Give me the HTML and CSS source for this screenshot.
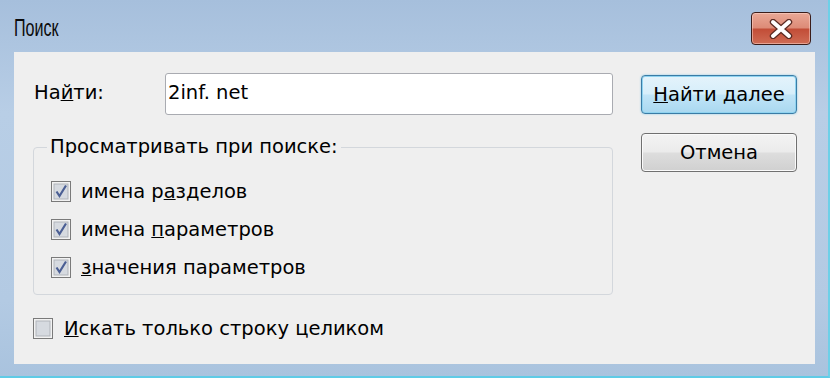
FILE: index.html
```html
<!DOCTYPE html>
<html>
  <head>
    <title>Поиск</title>
    <link rel="stylesheet" href="styles.css">
  </head>
  <body>
    <div class="window">
      <div class="titlebar">
        <span class="title">Поиск</span>
        <div class="close">
          <svg width="28" height="20" viewBox="0 0 28 20">
            <path d="M6 3 L22 17 M22 3 L6 17" stroke="#5a2a22" stroke-width="6.4" stroke-linecap="round"/>
            <path d="M6 3 L22 17 M22 3 L6 17" stroke="#ffffff" stroke-width="4" stroke-linecap="round"/>
          </svg>
        </div>
      </div>
      <div class="client">
        <div class="main">
          <div class="find-row">
            <label class="find-label">На<u>й</u>ти:</label>
            <div class="input">2inf. net</div>
          </div>
          <fieldset class="group">
            <legend>Просматривать при поиске:</legend>
            <div class="check">
              <svg class="box" width="20" height="21" viewBox="0 0 20 21">
                <rect x="0.5" y="0.5" width="19" height="20" fill="#f2f2f2" stroke="#7a7a7a"/>
                <rect x="3" y="3" width="14" height="15" fill="#d6dae0" stroke="#b0b4ba"/>
                <path d="M5.5 10.5 L8.5 15 L15 4.5" fill="none" stroke="#4b5f94" stroke-width="2.2"/>
              </svg>
              <span>имена р<u>а</u>зделов</span>
            </div>
            <div class="check">
              <svg class="box" width="20" height="21" viewBox="0 0 20 21">
                <rect x="0.5" y="0.5" width="19" height="20" fill="#f2f2f2" stroke="#7a7a7a"/>
                <rect x="3" y="3" width="14" height="15" fill="#d6dae0" stroke="#b0b4ba"/>
                <path d="M5.5 10.5 L8.5 15 L15 4.5" fill="none" stroke="#4b5f94" stroke-width="2.2"/>
              </svg>
              <span>имена <u>п</u>араметров</span>
            </div>
            <div class="check">
              <svg class="box" width="20" height="21" viewBox="0 0 20 21">
                <rect x="0.5" y="0.5" width="19" height="20" fill="#f2f2f2" stroke="#7a7a7a"/>
                <rect x="3" y="3" width="14" height="15" fill="#d6dae0" stroke="#b0b4ba"/>
                <path d="M5.5 10.5 L8.5 15 L15 4.5" fill="none" stroke="#4b5f94" stroke-width="2.2"/>
              </svg>
              <span><u>з</u>начения параметров</span>
            </div>
          </fieldset>
          <div class="check whole">
            <svg class="box" width="20" height="21" viewBox="0 0 20 21">
              <rect x="0.5" y="0.5" width="19" height="20" fill="#f2f2f2" stroke="#7a7a7a"/>
              <rect x="3" y="3" width="14" height="15" fill="#d6dae0" stroke="#b0b4ba"/>
            </svg>
            <span><u>И</u>скать только строку целиком</span>
          </div>
        </div>
        <div class="buttons">
          <div class="btn default"><u>Н</u>айти далее</div>
          <div class="btn">Отмена</div>
        </div>
      </div>
    </div>
  </body>
</html>
```

FILE: styles.css
```css
body {
  margin: 0;
  background: #ffffff;
}
.window {
  width: 830px;
  height: 378px;
  box-sizing: border-box;
  padding: 0 13px 12px 14px;
  background: linear-gradient(#a6bfdc, #b8cee6 30%, #b3cae3 80%, #a9c3de);
  border-right: 2px solid #6dd0e8;
  border-bottom: 2px solid #5fcbe6;
  display: flex;
  flex-direction: column;
  font-family: "DejaVu Sans", sans-serif;
  font-size: 19.5px;
  color: #000;
}
.titlebar {
  height: 52px;
  flex: none;
  display: flex;
  align-items: flex-start;
  justify-content: space-between;
}
.title {
  font-family: "Liberation Sans", sans-serif;
  font-size: 23px;
  margin-top: 15px;
  display: inline-block;
  transform: scaleX(0.7);
  transform-origin: left;
  color: #0b0b0b;
}
.close {
  width: 58px;
  height: 31px;
  margin-top: 12px;
  margin-right: 4px;
  border: 1px solid #3b1d1a;
  border-radius: 4px;
  background: linear-gradient(#e9a896, #dd8b77 48%, #c24d37 52%, #cf6c55);
  box-shadow: inset 0 0 0 1px rgba(255, 220, 210, 0.5);
  display: flex;
  align-items: center;
  justify-content: center;
}
.client {
  flex: 1;
  background: #efefef;
  display: flex;
}
.main {
  width: 580px;
  padding-left: 19px;
  padding-top: 21px;
}
.find-row {
  display: flex;
  align-items: center;
}
.find-label {
  width: 131px;
  padding-left: 1px;
  margin-top: -4px;
}
.input {
  width: 448px;
  height: 42px;
  box-sizing: border-box;
  background: #fff;
  border: 1px solid #a9abb1;
  border-radius: 3px;
  padding: 6px 2px;
  line-height: 26px;
}
.group {
  margin: 20px 0 0 0;
  padding: 13px 0 8px 17px;
  width: 580px;
  box-sizing: border-box;
  border: 1px solid #d3d7dc;
  border-radius: 4px;
}
.group legend {
  margin-left: -4px;
  padding: 0 3px;
  line-height: 24px;
}
.check {
  height: 38px;
  display: flex;
  align-items: center;
}
.check .box {
  flex: none;
  margin-right: 10px;
}
.whole {
  margin-top: 14px;
}
.whole .box {
  margin-right: 11px;
}
.buttons {
  margin-left: 28px;
  padding-top: 23px;
  display: flex;
  flex-direction: column;
  gap: 19px;
}
.btn {
  width: 156px;
  height: 39px;
  box-sizing: border-box;
  border: 1px solid #707070;
  border-radius: 4px;
  background: linear-gradient(#f3f3f3, #ebebeb 48%, #dddddd 52%, #d0d0d0);
  box-shadow: inset 0 0 0 1px #fafafa;
  display: flex;
  align-items: center;
  justify-content: center;
}
.btn.default {
  border-color: #3a7ca6;
  background: linear-gradient(#e4f3fb, #d6eefa 48%, #c0e4f7 52%, #a9d8f0);
  box-shadow: inset 0 0 0 1px #8fd3f0, 0 0 2px #7cc6e8;
}
```
